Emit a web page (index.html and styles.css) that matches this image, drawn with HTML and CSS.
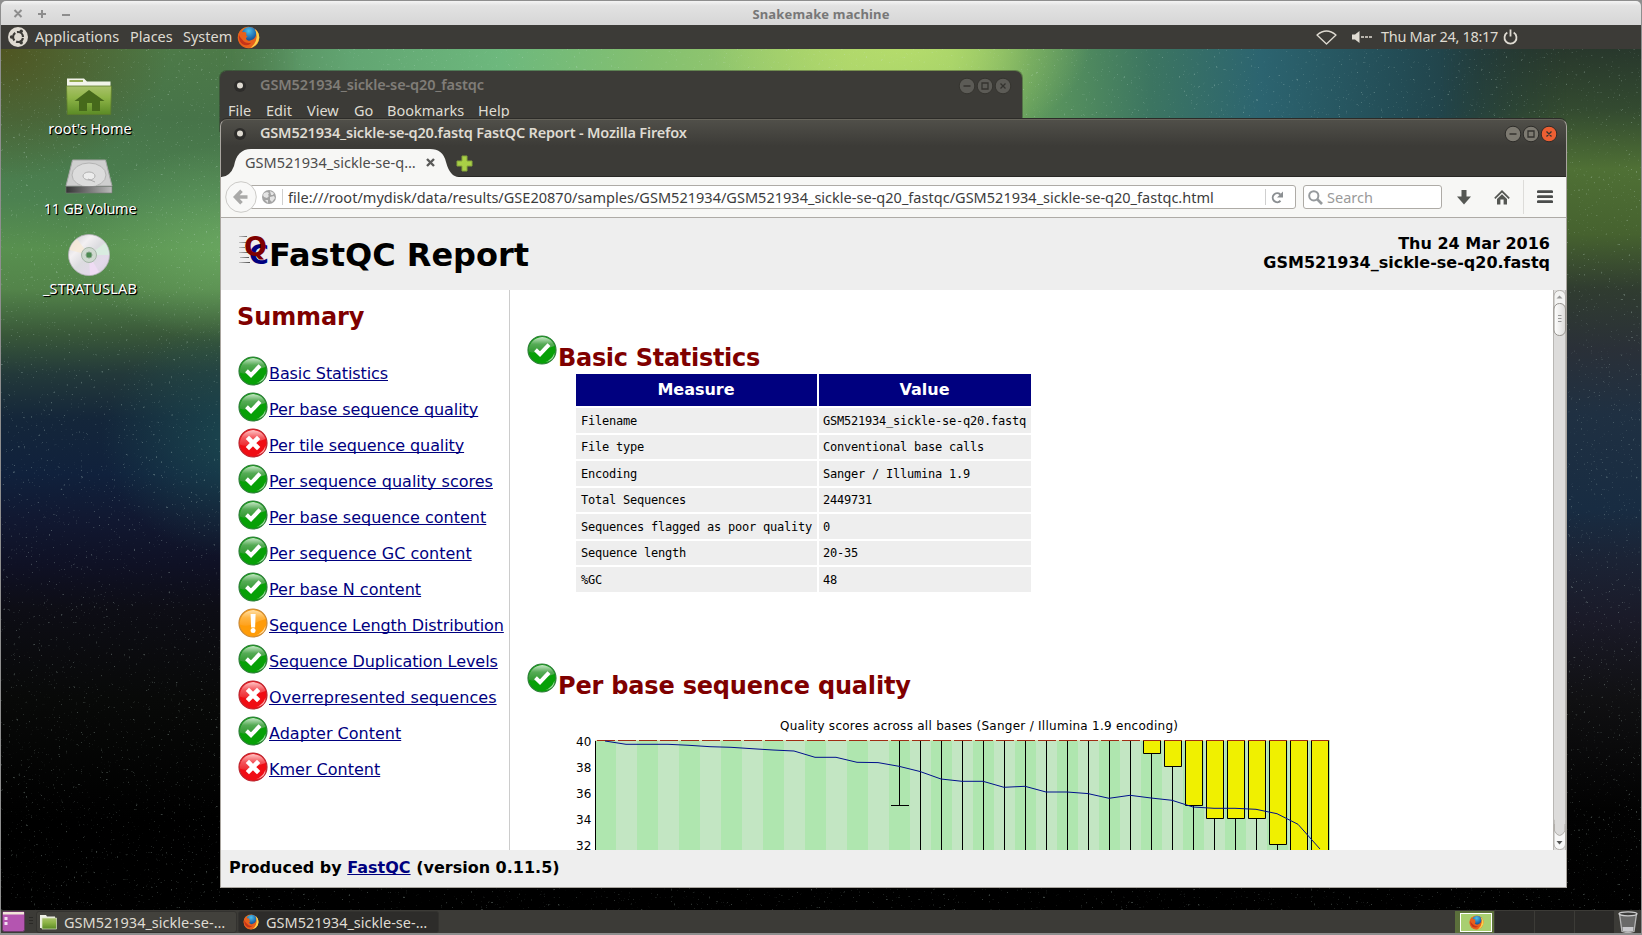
FILE: index.html
```html
<!DOCTYPE html>
<html lang="en">
<head>
<meta charset="utf-8">
<title>Snakemake machine</title>
<link rel="stylesheet" href="styles.css">
</head>
<body>
<svg class="defs" width="0" height="0" aria-hidden="true">
  <defs>
    <linearGradient id="gGreen" x1="0" y1="0" x2="0" y2="1"><stop offset="0" stop-color="#c4e6c4"/><stop offset=".45" stop-color="#56ab56"/><stop offset="1" stop-color="#2f9a2f"/></linearGradient>
    <linearGradient id="gRed" x1="0" y1="0" x2="0" y2="1"><stop offset="0" stop-color="#ffc4c4"/><stop offset=".5" stop-color="#f4565c"/><stop offset="1" stop-color="#ee2a30"/></linearGradient>
    <linearGradient id="gOrange" x1="0" y1="0" x2="0" y2="1"><stop offset="0" stop-color="#ffe0a8"/><stop offset=".5" stop-color="#ffb440"/><stop offset="1" stop-color="#ffa11c"/></linearGradient>
    <linearGradient id="gFox" x1="0" y1="0" x2="1" y2="1"><stop offset="0" stop-color="#f08a1c"/><stop offset=".5" stop-color="#e4501c"/><stop offset="1" stop-color="#f6b32c"/></linearGradient>
    <radialGradient id="gGlobe" cx=".45" cy=".25" r=".8"><stop offset="0" stop-color="#4cc0ea"/><stop offset=".6" stop-color="#1c64a8"/><stop offset="1" stop-color="#14306a"/></radialGradient>
    <linearGradient id="gFolder" x1="0" y1="0" x2="0" y2="1"><stop offset="0" stop-color="#a9c16b"/><stop offset=".4" stop-color="#8fb548"/><stop offset="1" stop-color="#5b8a25"/></linearGradient>
    <linearGradient id="gDisk" x1="0" y1="0" x2="1" y2="1"><stop offset="0" stop-color="#c9c9cc"/><stop offset=".3" stop-color="#f3f0f2"/><stop offset=".5" stop-color="#dcdce0"/><stop offset=".75" stop-color="#e3d9ea"/><stop offset="1" stop-color="#cfcfd4"/></linearGradient>
    <linearGradient id="gSide" x1="0" y1="0" x2="1" y2="0"><stop offset="0" stop-color="#333"/><stop offset="1" stop-color="#bbb"/></linearGradient>
    <linearGradient id="gSpeed" gradientUnits="userSpaceOnUse" x1="0" y1="0" x2="12" y2="0"><stop offset="0" stop-color="#d8d8d8"/><stop offset="1" stop-color="#555"/></linearGradient>
    <symbol id="pass" viewBox="0 0 32 32">
      <circle cx="16" cy="16" r="14" fill="#07a007" stroke="#2f7f3a" stroke-width="1.2"/>
      <path d="M2.8 17.5A13.3 13.3 0 0 1 28.6 12Q21 14 16 17.2Q9 20 2.8 17.5Z" fill="url(#gGreen)"/>
      <path d="M19 28.2Q26.500 25.500 28.500 18.500Q29 26.500 19 28.2Z" fill="#a5dca5"/>
      <path d="M9.500 15.800L14 20.200L23 10.600" fill="none" stroke="#fff" stroke-width="4"/>
    </symbol>
    <symbol id="fail" viewBox="0 0 32 32">
      <circle cx="16" cy="16" r="14" fill="#f00d14" stroke="#bb2730" stroke-width="1.2"/>
      <path d="M2.8 17.5A13.3 13.3 0 0 1 28.6 12Q21 14 16 17.2Q9 20 2.8 17.5Z" fill="url(#gRed)"/>
      <path d="M19 28.2Q26.500 25.500 28.500 18.500Q29 26.500 19 28.2Z" fill="#ffabab"/>
      <path d="M12 12L20 20M20 12L12 20" fill="none" stroke="#fff" stroke-width="4.6" stroke-linecap="square"/>
    </symbol>
    <symbol id="warn" viewBox="0 0 32 32">
      <circle cx="16" cy="16" r="14" fill="#ff9c08" stroke="#c98a3a" stroke-width="1.2"/>
      <path d="M2.8 17.5A13.3 13.3 0 0 1 28.6 12Q21 14 16 17.2Q9 20 2.8 17.5Z" fill="url(#gOrange)"/>
      <path d="M19 28.2Q26.500 25.500 28.500 18.500Q29 26.500 19 28.2Z" fill="#ffdfa5"/>
      <path d="M13.6 7h5l-.5 13.5h-4Z" fill="#fff"/><circle cx="16.1" cy="23.6" r="2.5" fill="#fff"/>
    </symbol>
    <symbol id="firefox" viewBox="0 0 24 24">
      <circle cx="12" cy="12" r="11.2" fill="url(#gFox)"/>
      <circle cx="13" cy="9.4" r="8.4" fill="url(#gGlobe)"/>
      <path d="M1.2 10Q2 5 5.2 3Q4.6 5.4 6 6.4Q8.5 6 10 7.4Q8.6 9.6 11 11.2Q9.2 12 9.4 13.6Q11.6 16.4 15 14.6Q18.6 13.8 20 9Q20.6 6 18.6 3Q23 6.4 23 12.4Q21.6 22.6 12 23Q2.4 22.4 1.2 13Z" fill="#e8601c"/>
      <path d="M18.6 3Q23.4 6.4 23.2 12.6Q21.8 20.6 14.4 22.6Q20 18 20.4 12Q20.8 7 18.6 3Z" fill="#fbd24c"/>
      <path d="M2 9Q3 12 5.6 14.4Q9 19 15 17.4Q11 22 5.4 18.8Q1.4 15 2 9Z" fill="#c5331a"/>
    </symbol>
    <symbol id="dot" viewBox="0 0 16 16"><circle cx="8" cy="8" r="6" fill="#2d2c2a"/><circle cx="8" cy="7.6" r="3" fill="#dfdbd2"/></symbol>
  </defs>
</svg>

<div class="machine">
  <header class="vm-title">
    <svg class="vm-buttons" width="80" height="24" viewBox="0 0 80 24"><g stroke="#8d8d8d" stroke-width="2" fill="none"><path d="M13.5 9l7 7M20.5 9l-7 7M37 13h8M41 9v8M61 14h8"/></g></svg>
    <span class="vm-name">Snakemake machine</span>
  </header>

  <nav class="panel">
    <svg class="ubuntu" width="20" height="20" viewBox="0 0 20 20"><circle cx="10" cy="10" r="10" fill="#dfdbd2"/><circle cx="10" cy="10" r="5" fill="none" stroke="#3c3b37" stroke-width="2.2" stroke-dasharray="8.6 1.87" stroke-dashoffset="-1"/><g fill="#3c3b37"><circle cx="3.5" cy="10" r="1.7"/><circle cx="13.2" cy="4.3" r="1.7"/><circle cx="13.2" cy="15.7" r="1.7"/></g></svg>
    <span class="p-apps">Applications</span><span class="p-places">Places</span><span class="p-system">System</span>
    <svg class="p-fox" width="23" height="23"><use href="#firefox"/></svg>
    <div class="tray">
      <svg class="wifi" width="21" height="15" viewBox="0 0 21 15"><path d="M1 5Q10.500 -3 20 5L10.500 14Z" fill="none" stroke="#dfdbd2" stroke-width="1.3" stroke-linejoin="round"/></svg>
      <svg class="vol" width="21" height="14" viewBox="0 0 21 14"><path d="M0 4.500h3l4.500 -3.500v12l-4.500 -3.500h-3Z" fill="#dfdbd2"/><path d="M9 7h11" stroke="#dfdbd2" stroke-width="1.4" stroke-dasharray="3 1"/></svg>
      <span class="clock">Thu Mar 24, 18:17</span>
      <svg width="15" height="16" viewBox="0 0 15 16"><path d="M4.300 3.600A6 6 0 1 0 10.700 3.600M7.500 .5v7" fill="none" stroke="#dfdbd2" stroke-width="1.800"/></svg>
    </div>
  </nav>

  <main class="desktop">
    <div class="sky sky-top"></div>
    <div class="sky sky-left"></div>
    <div class="sky sky-right"></div>
    <svg class="stars" width="1640" height="861" aria-hidden="true">
      <filter id="sparkle" x="0" y="0" width="100%" height="100%"><feTurbulence type="fractalNoise" baseFrequency=".4" numOctaves="2" seed="8"/><feColorMatrix values="0 0 0 0 .62  0 0 0 0 .8  0 0 0 0 .72  0 7 0 0 -4.900"/></filter>
      <rect width="1640" height="861" filter="url(#sparkle)"/>
    </svg>
    <div class="shortcuts">
      <div class="shortcut">
        <svg width="48" height="40" viewBox="0 0 48 40"><path d="M2 1.500h17l3 3h23.500v8H2Z" fill="#f2f4ea"/><path d="M4.500 3h13.500v2H4.500Z" fill="#94ab50"/><path d="M1.500 9h45l-.8 28.500H2.300Z" fill="url(#gFolder)" stroke="#5d7c2c" stroke-width=".8"/><path d="M24 13L9.500 24h4.500v10h8v-8h5v8h8V24h4.500Z" fill="#46691b"/></svg>
        <span>root's Home</span>
      </div>
      <div class="shortcut">
        <svg width="48" height="40" viewBox="0 0 48 40"><path d="M7.500 3h33L47 29H1Z" fill="#cfcfcf" stroke="#a6a6a6"/><ellipse cx="24" cy="18" rx="17" ry="12" fill="#dcdcdc" stroke="#b4b4b4"/><ellipse cx="24" cy="19" rx="6" ry="4" fill="#ececec" stroke="#b0b0b0"/><path d="M23 22l7 3" stroke="#aaa"/><path d="M1 29.500h46v6.500H1Z" fill="url(#gSide)" stroke="#777" stroke-width=".6"/></svg>
        <span class="volume">11 GB Volume</span>
      </div>
      <div class="shortcut">
        <svg width="48" height="44" viewBox="0 0 48 44"><circle cx="24" cy="22" r="20.500" fill="url(#gDisk)" stroke="#b7b3bb" stroke-width=".8"/><path d="M24 22L4.500 17A20 20 0 0 1 12 6Z" fill="#f7ead6" opacity=".8"/><path d="M24 22L40 10A20 20 0 0 1 44 22Z" fill="#d7f0df" opacity=".8"/><path d="M24 22L34 39A20 20 0 0 1 25 42Z" fill="#efdcf4"/><circle cx="24" cy="22" r="7.500" fill="#cfdad0" stroke="#a6b7a8"/><circle cx="24" cy="22" r="3" fill="#4b8a51" stroke="#87a68a"/></svg>
        <span class="stratus">_STRATUSLAB</span>
      </div>
    </div>

    <section class="window files">
      <div class="titlebar"><svg class="w-dot" width="16" height="16"><use href="#dot"/></svg><span class="w-title">GSM521934_sickle-se-q20_fastqc</span>
        <svg class="w-buttons" width="54" height="18" viewBox="0 0 54 18"><g fill="#5c5b56" stroke="#35342f"><circle cx="9" cy="9" r="7.800"/><circle cx="27" cy="9" r="7.800"/><circle cx="45" cy="9" r="7.800"/></g><g fill="none" stroke="#34332f" stroke-width="1.300"><path d="M5.500 9h7M24 6h6v6h-6ZM42.500 6.500l5 5M47.500 6.500l-5 5"/></g></svg>
      </div>
      <div class="menu"><span class="m1">File</span><span class="m2">Edit</span><span class="m3">View</span><span class="m4">Go</span><span class="m5">Bookmarks</span><span class="m6">Help</span></div>
    </section>

    <section class="window browser">
      <div class="titlebar"><svg class="w-dot" width="16" height="16"><use href="#dot"/></svg><span class="w-title">GSM521934_sickle-se-q20.fastq FastQC Report - Mozilla Firefox</span>
        <svg class="w-buttons" width="54" height="18" viewBox="0 0 54 18"><g fill="#7d7a71" stroke="#2d2c29"><circle cx="9" cy="9" r="7.800"/><circle cx="27" cy="9" r="7.800"/><circle cx="45" cy="9" r="7.800" fill="#ec5f33"/></g><g fill="none" stroke="#34332f" stroke-width="1.300"><path d="M5.500 9h7M24 6h6v6h-6ZM42.500 6.500l5 5M47.500 6.500l-5 5"/></g></svg>
      </div>
      <div class="tabs">
        <div class="tab">
          <svg class="tab-shape" width="240" height="28" viewBox="0 0 240 28"><path d="M0 28Q9 28 13 17Q16 0 30 0H209Q222 0 225 13Q229 28 238 28Z" fill="#f7f7f5"/></svg>
          <span class="tab-text">GSM521934_sickle-se-q…</span>
          <svg class="tab-close" width="9" height="9" viewBox="0 0 9 9"><path d="M1 1l7 7M8 1L1 8" stroke="#5a5a58" stroke-width="2.400"/></svg>
        </div>
        <svg class="tab-plus" width="17" height="17" viewBox="0 0 17 17"><path d="M6 1h5v5h5v5h-5v5H6v-5H1V6h5Z" fill="#a9d046" stroke="#86a63a" stroke-width="1"/></svg>
      </div>
      <div class="toolbar">
        <svg class="back" width="32" height="32" viewBox="0 0 32 32"><circle cx="16" cy="16" r="15.300" fill="#f8f8f7" stroke="#cbcac7"/><path d="M22.500 16H11M16.500 9.800L10.500 16l6 6.200" fill="none" stroke="#a9a9a8" stroke-width="3.600"/></svg>
        <div class="url">
          <svg width="14" height="14" viewBox="0 0 14 14"><circle cx="7" cy="7" r="7" fill="#a3a3a3"/><path d="M2 3l3-1 2 1-1 2 1 1-2 2-3-1-1-2ZM8 1l4 2-1 2-2 0ZM8 7l4-1 1 2-3 4-2-2ZM3 10l3 0 0 3Z" fill="#e4e4e4"/></svg>
          <i class="bar"></i>
          <span class="address">file:///root/mydisk/data/results/GSE20870/samples/GSM521934/GSM521934_sickle-se-q20_fastqc/GSM521934_sickle-se-q20_fastqc.html</span>
          <i class="bar last"></i>
          <svg class="reload" width="13" height="13" viewBox="0 0 13 13"><path d="M9.500 9.800A4.500 4.500 0 1 1 9.300 3.400" fill="none" stroke="#8b8f92" stroke-width="2"/><path d="M12 .5v6H6Z" fill="#8b8f92"/></svg>
        </div>
        <div class="search"><svg width="15" height="15" viewBox="0 0 15 15"><circle cx="5.800" cy="5.800" r="4.600" fill="none" stroke="#969a9d" stroke-width="2"/><path d="M9 9l5 5" stroke="#969a9d" stroke-width="2.600"/></svg><span>Search</span></div>
        <svg class="download" width="14" height="15" viewBox="0 0 14 15"><path d="M4.500 0h5v6.500H14L7 14.500 0 6.500h4.500Z" fill="#555753"/></svg>
        <svg class="home" width="16" height="15" viewBox="0 0 16 15"><path d="M.8 8.300L8 1.300l7.200 7" fill="none" stroke="#555753" stroke-width="1.700"/><path d="M3 9l5-4.800 5 4.800V14.500H9.600V9.500H6.400v5H3Z" fill="#555753"/></svg>
        <i class="divider"></i>
        <svg class="burger" width="16" height="14" viewBox="0 0 16 14"><path d="M1.200 1.700h13.600M1.200 6.700h13.600M1.200 11.700h13.600" stroke="#4b4d4b" stroke-width="2.700" stroke-linecap="round"/></svg>
      </div>

      <div class="report">
        <div class="report-head">
          <svg class="logo" width="32" height="38" viewBox="0 0 32 38"><path d="M2 5h8v1H2ZM2 11h7v1H2ZM2 16h6v1H2ZM2 21h9v1H2ZM3 26h9v1H3ZM2 31h11v1H2Z" fill="url(#gSpeed)"/><text x="12" y="33" class="logo-c">C</text><text x="7" y="25" class="logo-q">Q</text></svg>
          <h1>FastQC Report</h1>
          <div class="run">Thu 24 Mar 2016<br>GSM521934_sickle-se-q20.fastq</div>
        </div>
        <div class="report-body">
          <aside class="summary">
            <h2>Summary</h2>
            <ul>
              <li><svg width="32" height="32"><use href="#pass"/></svg><a class="tight">Basic Statistics</a></li>
              <li><svg width="32" height="32"><use href="#pass"/></svg><a class="snug">Per base sequence quality</a></li>
              <li><svg width="32" height="32"><use href="#fail"/></svg><a class="tight">Per tile sequence quality</a></li>
              <li><svg width="32" height="32"><use href="#pass"/></svg><a>Per sequence quality scores</a></li>
              <li><svg width="32" height="32"><use href="#pass"/></svg><a>Per base sequence content</a></li>
              <li><svg width="32" height="32"><use href="#pass"/></svg><a>Per sequence GC content</a></li>
              <li><svg width="32" height="32"><use href="#pass"/></svg><a>Per base N content</a></li>
              <li><svg width="32" height="32"><use href="#warn"/></svg><a class="tight">Sequence Length Distribution</a></li>
              <li><svg width="32" height="32"><use href="#pass"/></svg><a class="snug">Sequence Duplication Levels</a></li>
              <li><svg width="32" height="32"><use href="#fail"/></svg><a class="loose">Overrepresented sequences</a></li>
              <li><svg width="32" height="32"><use href="#pass"/></svg><a>Adapter Content</a></li>
              <li><svg width="32" height="32"><use href="#fail"/></svg><a>Kmer Content</a></li>
            </ul>
          </aside>
          <div class="modules">
            <div class="module-head"><svg width="32" height="32"><use href="#pass"/></svg><h2>Basic Statistics</h2></div>
            <div class="stats">
              <b>Measure</b><b>Value</b>
              <span>Filename</span><span>GSM521934_sickle-se-q20.fastq</span>
              <span>File type</span><span>Conventional base calls</span>
              <span>Encoding</span><span>Sanger / Illumina 1.9</span>
              <span>Total Sequences</span><span>2449731</span>
              <span>Sequences flagged as poor quality</span><span>0</span>
              <span>Sequence length</span><span>20-35</span>
              <span>%GC</span><span>48</span>
            </div>
            <div class="module-head second"><svg width="32" height="32"><use href="#pass"/></svg><h2>Per base sequence quality</h2></div>
            <svg class="chart" width="800" height="142" viewBox="560 708 800 142">
              <defs><pattern id="stripes" x="595" y="0" width="42" height="10" patternUnits="userSpaceOnUse"><rect width="21" height="10" fill="#afe6af"/><rect x="21" width="21" height="10" fill="#c3e6c3"/></pattern></defs>
              <rect x="595" y="740" width="735" height="112" fill="url(#stripes)"/>
              <g class="ink">
                <path d="M595.500 740V852M899.500 740V805.500M891 805.500h18M920.500 740V852M941.500 740V852M962.500 740V852M983.500 740V852M1004.500 740V852M1025.500 740V852M1046.500 740V852M1067.500 740V852M1088.500 740V852M1109.500 740V852M1130.500 740V852M1151.500 740V852M1172.500 740V852M1193.500 740V852M1214.500 740V852M1235.500 740V852M1256.500 740V852M1277.500 740V852"/>
                <g fill="#f0f000"><path d="M1143.500 740.500h17v13h-17ZM1164.500 740.500h17v26h-17ZM1185.500 740.500h17v65h-17ZM1206.500 740.500h17v78h-17ZM1227.500 740.500h17v78h-17ZM1248.500 740.500h17v78h-17ZM1269.500 740.500h17v104h-17ZM1290.500 740.500h17v120h-17ZM1311.500 740.500h17v120h-17Z"/></g>
              </g>
              <path d="M595 740.500H1329" stroke="#dfe3b4" fill="none"/>
              <path d="M597 740.500H1329" stroke="#a02c14" stroke-dasharray="18 3" fill="none"/>
              <polyline fill="none" stroke="#00108c" stroke-width="1" points="605,741 626,744.300 647,744.300 668,744.300 689,745.300 710,746.700 731,747.300 752,748.700 773,750 794,751 815,757.300 836,757.300 857,762.300 878,762.600 899,766.300 920,771.500 941,779 962,781.300 983,781.300 1004,787.300 1025,786.300 1046,792 1067,792 1088,793.600 1109,798.300 1130,795.300 1151,798 1172,800.300 1193,807 1214,808.300 1235,808.300 1256,809.300 1277,813.700 1298,824.300 1320,849"/>
              <text x="780" y="730" textLength="398">Quality scores across all bases (Sanger / Illumina 1.9 encoding)</text>
              <text x="576" y="746">40</text><text x="576" y="772">38</text><text x="576" y="798">36</text><text x="576" y="824">34</text><text x="576" y="850">32</text>
            </svg>
          </div>
          <svg class="scrollbar" width="13" height="560" viewBox="0 0 13 560">
            <defs><linearGradient id="gThumb"><stop offset="0" stop-color="#fff"/><stop offset="1" stop-color="#dcdbd9"/></linearGradient></defs>
            <rect width="13" height="560" fill="#dddcdb"/><path d="M.5 0V560M12.500 0V560" stroke="#b9b7b4"/>
            <rect x="1" y=".5" width="11.500" height="30" rx="5.500" fill="#f4f4f3" stroke="#b2afab"/><path d="M3.500 8.500l3-3 3 3Z" fill="#999"/>
            <rect x="1" y="13.500" width="11.500" height="32" rx="5.500" fill="url(#gThumb)" stroke="#96938e"/><path d="M5 25.500h3.500M5 28.500h3.500M5 31.500h3.500" stroke="#999"/>
            <rect x="1" y="530" width="11.500" height="29.500" rx="5.500" fill="#f8f8f8" stroke="#b2afab"/><path d="M1.500 530V541Q6.500 550 12 541V530Z" fill="#dddcdb" stroke="#b2afab"/><rect x="1.600" y="528" width="10.500" height="6" fill="#dddcdb"/><path d="M3.500 551h6l-3 3.500Z" fill="#555"/>
          </svg>
        </div>
        <div class="report-foot">Produced by <a>FastQC</a> (version 0.11.5)</div>
      </div>
    </section>
  </main>

  <footer class="taskbar">
    <svg class="show" width="23" height="21" viewBox="0 0 23 21"><rect x=".5" y=".5" width="22" height="20" rx="2" fill="#b455b0" stroke="#6b3a67"/><rect x="1" y="1" width="21" height="2.500" fill="#f0e6d8"/><path d="M2.500 6h3v3h-3ZM2.500 11h3v3h-3Z" fill="#f3dff2"/></svg>
    <svg class="grip" width="6" height="12"><path d="M1 2.500h4M1 5.500h4M1 8.500h4" stroke="#2a2926"/></svg>
    <div class="task"><svg width="17" height="16" viewBox="0 0 17 16"><path d="M0 1h6l1 1.500h8V14H0Z" fill="#eef0e4"/><path d="M2 4h14.500v11H2Z" fill="url(#gFolder)" stroke="#d9e2c4" stroke-width=".7"/></svg><span>GSM521934_sickle-se-…</span></div>
    <div class="task active"><svg width="16" height="16"><use href="#firefox"/></svg><span>GSM521934_sickle-se-…</span></div>
    <div class="spaces"><div class="space on"><div class="mini"><svg width="15" height="15"><use href="#firefox"/></svg></div></div><div class="space"></div><div class="space"></div><div class="space"></div></div>
    <svg class="trash" width="20" height="22" viewBox="0 0 20 22"><path d="M1.500 3L4 20.500Q10 22.500 16 20.500L18.500 3Z" fill="#6a6a69" stroke="#b5b5b5" stroke-width="1.300"/><path d="M4.500 16h11l-.5 4q-5 1.500-10 0Z" fill="#c9c9cc"/><ellipse cx="10" cy="2.800" rx="9" ry="2" fill="#3c3c3a" stroke="#cfcfcf" stroke-width="1.300"/></svg>
  </footer>
</div>
</body>
</html>
```

FILE: styles.css
```css
* { box-sizing: border-box; }
body { margin: 0; width: 1642px; height: 935px; overflow: hidden; background: #8e8e8e; font-family: "Noto Sans", "Open Sans", sans-serif; font-size: 14.5px; }
.defs { position: absolute; }
svg { display: block; flex: none; }
h1, h2, ul { margin: 0; padding: 0; }
span { white-space: nowrap; }

.machine { display: flex; flex-direction: column; width: 1642px; height: 935px; padding: 1px 1px 2px; }
.vm-title { display: grid; grid-template-columns: 80px 1fr 80px; align-items: center; height: 24px; border-radius: 5px 5px 0 0; background: linear-gradient(#f4f4f4, #e2e2e2 20%, #d6d6d6); }
.vm-name { justify-self: center; padding-top: 1px; color: #777; font-size: 13px; font-weight: 700; letter-spacing: .15px; }

.panel { display: flex; align-items: center; height: 24px; padding-left: 7px; background: #3c3b37; color: #dfdbd2; }
.panel span { padding-bottom: 2px; }
.p-apps { width: 84px; margin-left: 7px; letter-spacing: .08px; }
.p-places { width: 43px; margin-left: 11px; }
.p-system { width: 48px; margin-left: 10px; }
.p-fox { margin-left: 6px; }
.tray { display: flex; align-items: center; margin-left: auto; margin-right: 123px; }
.vol { margin-left: 15px; }
.clock { width: 116px; margin: 0 6px 0 8px; letter-spacing: -.3px; }

.desktop { position: relative; height: 861px; background: #000; }
.sky { position: absolute; left: 0; top: 0; height: 861px; }
.sky-left { width: 300px; background:
  radial-gradient(ellipse 170px 100px at 240px 195px, rgba(120,186,110,.55), transparent),
  radial-gradient(ellipse 140px 120px at 240px 390px, rgba(34,100,96,.55), transparent),
  radial-gradient(ellipse 170px 130px at 0 0, rgba(80,72,20,.75), transparent),
  linear-gradient(#4d7a48, #477449 70px, #4c8150 150px, #58904f 200px, #53844a 240px, #395839 285px, #23393a 325px, #14263a 370px, #10213c 425px, #111831 470px, #0f1125 515px, #0d0d15 560px, #080908 650px, #000 770px);
  mask-image: linear-gradient(90deg, #000 218px, transparent); }
.sky-top { width: 1640px; height: 72px; background:
  radial-gradient(ellipse 190px 120px at 900px -10px, #b6dd6c, transparent),
  linear-gradient(90deg, #4b5c30, #4f7d50 200px, #62a572 350px, #6db87d 500px, #84c070 650px, #a4ce6a 850px, #94c565 950px, #5f9a5c 1030px, #3c7561 1150px, #2c6470 1260px, #234c55 1400px, #213e42 1480px, #283528); }
.sky-right { left: 1440px; width: 200px; background: linear-gradient(#28382c, #334a30 60px, #4f7035 120px, #46622f 185px, #303c30 240px, #2a3038 300px, #1f3042 365px, #182c42 460px, #1b2335 510px, #1a1a28 570px, #101012 650px, #020202 760px, #000);
  mask-image: linear-gradient(90deg, transparent, #000 126px); }
.stars { position: absolute; left: 0; top: 0; opacity: .28; }
.shortcuts { position: relative; display: flex; flex-direction: column; align-items: center; width: 178px; padding-top: 28px; }
.shortcut { display: flex; flex-direction: column; align-items: center; height: 80px; color: #fff; text-shadow: 1px 1px 1px #000, 1px 1px 0 #000; }
.shortcut:nth-child(2) { height: 76px; }
.shortcut span { line-height: 22px; }
.volume { letter-spacing: -.25px; }
.stratus { letter-spacing: .12px; }
.shortcut svg { margin-left: -2px; }

.window { position: absolute; background: #3c3b37; }
.files { left: 219px; top: 22px; width: 802px; height: 60px; border-radius: 7px 7px 0 0; box-shadow: 0 0 0 1px rgba(40,40,36,.4); }
.titlebar { display: flex; align-items: center; height: 29px; padding: 0 10px 0 12px; }
.w-title { margin-left: 12px; padding-bottom: 3px; font-weight: 600; letter-spacing: -.19px; }
.w-buttons { margin-left: auto; }
.files .w-title { color: #807d78; letter-spacing: -.12px; }
.menu { display: flex; padding-left: 8px; line-height: 21px; color: #dfdbd2; }
.m1 { width: 38px; } .m2 { width: 41px; } .m3 { width: 47px; } .m4 { width: 33px; } .m5 { width: 91px; }

.browser { left: 219px; top: 70px; width: 1347px; height: 769px; display: flex; flex-direction: column; border: 1px solid #a9a59f; border-top: 1px solid #66645b; border-radius: 7px 7px 0 0; background: linear-gradient(#504f49, #3c3b37 26px); box-shadow: 0 -1px 0 #2c2b28; }
.browser .titlebar { height: 28px; padding: 0 8px 1px 11px; color: #dfdbd2; }
.tabs { display: flex; height: 29px; border-bottom: 1px solid #282724; }
.tab { position: relative; width: 234px; padding-top: 1px; }
.tab-shape { position: absolute; left: 0; top: 1px; }
.tab-text { position: absolute; left: 24px; top: 4px; color: #4c4c4c; letter-spacing: .03px; }
.tab-close { position: absolute; left: 205px; top: 10px; }
.tab-plus { margin: 7px 0 0 1px; }
.toolbar { display: flex; align-items: center; height: 41px; padding: 0 12px 0 4px; background: #f7f7f5; border-bottom: 1px solid #aeaba6; }
.back { position: relative; z-index: 1; }
.url { display: flex; align-items: center; width: 1045px; height: 24px; margin-left: -6px; padding: 0 11px 0 10px; border: 1px solid #aeaba6; border-radius: 0 3px 3px 0; background: #fff; color: #3c3c3c; }
.bar { width: 1px; height: 16px; margin: 0 5px 0 6px; background: #cfcfcf; }
.bar.last { margin-left: 3px; }
.address { width: 976px; letter-spacing: .018px; }
.reload { margin-left: auto; }
.search { display: flex; align-items: center; width: 139px; height: 24px; margin-left: 7px; padding-left: 4px; gap: 4px; border: 1px solid #aeaba6; border-radius: 3px; background: #fff; color: #9a9a9a; }
.download { margin-left: 15px; }
.home { margin-left: 23px; }
.divider { width: 1px; height: 34px; margin: 0 13px; background: #dddcd9; }

.report { display: flex; flex-direction: column; flex: 1; background: #eee; font-family: "DejaVu Sans", sans-serif; font-size: 16px; color: #000; }
.report-head { display: flex; height: 72px; padding: 0 16px; }
.logo { margin-top: 13px; overflow: visible; }
.logo-q, .logo-c { font: 700 27px "DejaVu Sans", sans-serif; fill: #00007f; }
.logo-q { fill: #7f0000; }
h1 { font-size: 32px; line-height: 74px; }
.run { margin-left: auto; padding-top: 16px; font-weight: 700; line-height: 19px; text-align: right; }
.report-body { display: flex; height: 560px; background: #fff; }
.summary { width: 289px; padding-left: 16px; border-right: 1px solid #ccc; }
h2 { color: #7f0000; font-size: 24px; line-height: 28px; white-space: nowrap; }
.summary h2 { padding-top: 13px; height: 63px; letter-spacing: -.1px; }
.summary ul { list-style: none; }
.summary li { display: flex; height: 36px; white-space: nowrap; }
.summary li svg { margin-top: 2px; }
.summary li a { line-height: 41px; }
.tight { letter-spacing: -.1px; }
.snug { letter-spacing: -.06px; }
.loose { letter-spacing: .08px; }
a { color: #00007f; text-decoration: underline; text-decoration-skip-ink: none; }
.modules { flex: 1; padding: 44px 0 0 16px; overflow: hidden; }
.module-head { display: flex; height: 40px; }
.module-head h2 { padding-top: 10px; letter-spacing: -.3px; }
.module-head.second { margin-top: 70.5px; height: 46px; }
.module-head.second h2 { letter-spacing: -.19px; }
.stats { display: grid; grid-template-columns: 241px 212px; grid-template-rows: 32px; grid-auto-rows: 24.500px; gap: 2px; margin-left: 50px; font: 12px "DejaVu Sans Mono", monospace; }
.stats b { padding-right: 1px; background: #00007f; color: #fff; font: 700 16px/31px "DejaVu Sans", sans-serif; text-align: center; }
.stats span { padding-left: 5px; background: #eee; line-height: 25px; letter-spacing: -.224px; }
.stats span:nth-child(4n), .stats span:nth-child(4n+3) { line-height: 26px; }
.stats span:nth-child(even) { padding-left: 4px; }
.chart { margin-left: 34px; }
.chart text { font: 12px "DejaVu Sans", sans-serif; fill: #000; }
.ink path { stroke: #000; stroke-width: 1; }
.report-foot { padding: 8px; font-weight: 700; line-height: 19px; }

.taskbar { display: flex; height: 23px; padding: 1px 3px 0 1px; background: #3c3b37; color: #dfdbd2; }
.grip { margin: 4px 3px 0 3px; }
.task { display: flex; align-items: center; width: 201px; margin-left: -1px; margin-right: 2px; padding-left: 3px; gap: 7px; border: 1px solid #33322f; border-radius: 3px; background: #42413c; }
.task.active { background: #2d2c2a; padding-left: 4px; }
.spaces { display: flex; gap: 1px; margin-left: auto; margin-right: 4px; }
.space { width: 39px; background: #2b2a28; }
.on { padding: 2px 2px 1px 5px; background: #5b6f3b; }
.mini { display: flex; align-items: center; justify-content: center; height: 19px; border: 1px solid #fff; background: #a8cf70; }
```
